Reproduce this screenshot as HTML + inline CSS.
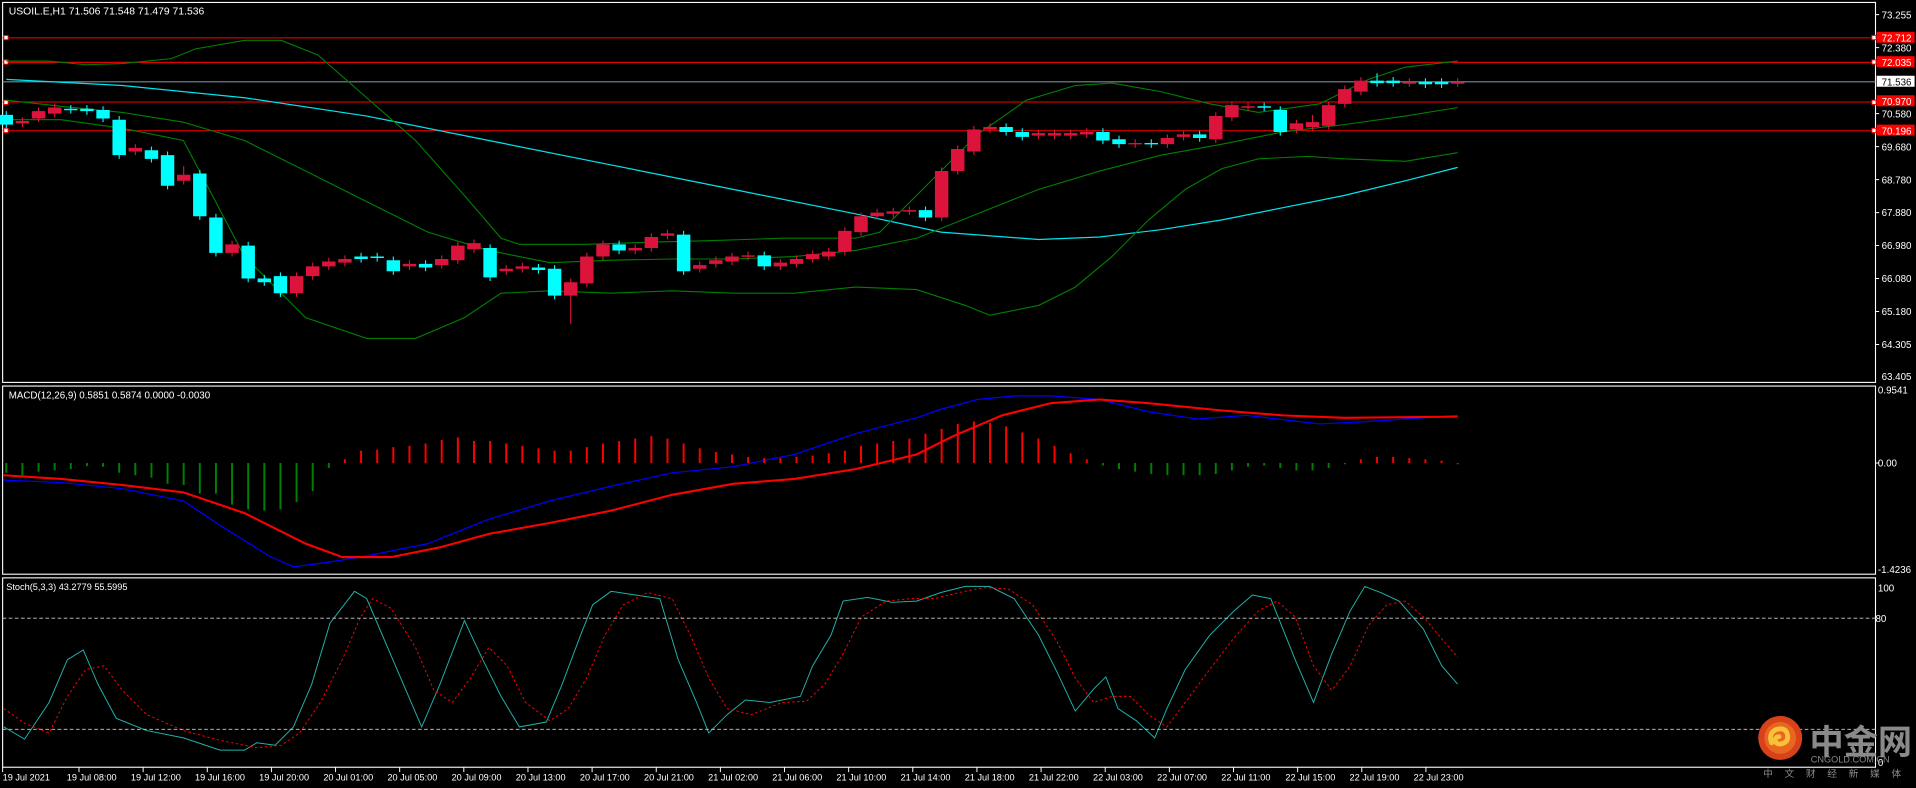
<!DOCTYPE html>
<html><head><meta charset="utf-8"><style>
html,body{margin:0;padding:0;background:#000;overflow:hidden}
svg{display:block}
text{font-family:"Liberation Sans",sans-serif;fill:#fff}
</style></head><body>
<svg width="1916" height="788" viewBox="0 0 1568 645" xmlns="http://www.w3.org/2000/svg">
<rect width="1568" height="645" fill="#000"/>
<g fill="none" stroke="#fff" stroke-width="0.9">
<rect x="2" y="2" width="1533" height="311"/>
<rect x="2" y="316" width="1533" height="154"/>
<rect x="2" y="473" width="1533" height="155"/>
</g>
<g stroke-width="0.9">
<line x1="2" x2="1535" y1="31" y2="31" stroke="#f00"/>
<line x1="2" x2="1535" y1="51" y2="51" stroke="#f00"/>
<line x1="2" x2="1535" y1="67" y2="67" stroke="#778899"/>
<line x1="2" x2="1535" y1="83.5" y2="83.5" stroke="#f00"/>
<line x1="2" x2="1535" y1="107" y2="107" stroke="#f00" stroke-width="0.7"/>
</g>
<g fill="#fff" stroke="#f00" stroke-width="0.8">
<rect x="3" y="29" width="3.5" height="3.5"/><rect x="3" y="49" width="3.5" height="3.5"/><rect x="3" y="82" width="3.5" height="3.5"/><rect x="3" y="105" width="3.5" height="3.5"/>
<rect x="1532" y="29" width="3.5" height="3.5"/><rect x="1532" y="49" width="3.5" height="3.5"/><rect x="1532" y="82" width="3.5" height="3.5"/><rect x="1532" y="105" width="3.5" height="3.5"/>
</g>
<!-- indicators -->
<g fill="none">
<polyline stroke="#00e5ee" stroke-width="1" points="5,65 100,70 200,80 300,95 400,115 500,135 600,155 700,175 770,190 850,196 900,194 950,188 1000,180 1050,170 1100,160 1150,148 1193,137"/>
<polyline stroke="#008000" stroke-width="0.9" points="5,50 40,50 70,53 100,52 140,48 160,40 200,33 230,33 260,45 300,80 340,115 380,160 410,195 425,200 480,200 540,198 580,197 640,195 700,195 720,190 760,150 800,110 840,82 880,70 910,68 950,75 990,85 1030,92 1080,85 1120,65 1150,55 1193,50"/>
<polyline stroke="#008000" stroke-width="0.9" points="5,82 50,87 100,92 150,100 200,115 250,140 300,165 350,190 400,205 450,215 500,213 550,212 600,212 650,210 700,205 750,195 800,175 850,155 900,140 950,127 1000,118 1050,108 1100,102 1150,95 1193,88"/>
<polyline stroke="#008000" stroke-width="0.9" points="5,98 50,98 100,105 150,115 200,210 250,260 300,277 340,277 380,260 410,240 450,238 500,240 550,238 600,240 650,240 700,235 750,237 790,250 810,258 850,250 880,235 910,210 940,180 970,155 1000,138 1030,130 1070,128 1100,130 1150,132 1193,125"/>
<polyline stroke="#0000ff" stroke-width="1" points="3,393 50,395 100,400 150,410 180,430 220,455 240,464 270,460 300,455 350,445 400,425 450,410 500,398 550,387 600,382 650,372 700,355 750,342 770,335 800,327 830,324 860,324 900,327 940,337 980,343 1020,340 1080,347 1120,345 1193,340"/>
<polyline stroke="#ff0000" stroke-width="1.7" points="3,389 50,392 100,397 150,403 200,420 250,445 280,456 320,456 360,448 400,437 450,428 500,418 550,405 600,396 650,392 700,384 750,372 780,357 820,340 860,330 900,327 940,330 1000,336 1050,340 1100,342 1193,341"/>
<polyline stroke="#20b2aa" stroke-width="0.8" points="3,595 20,605 40,575 55,540 68,532 80,560 95,588 120,598 150,604 180,614 200,614 210,608 225,610 240,595 255,560 270,510 290,484 300,490 315,525 330,560 345,595 360,560 380,508 395,540 410,570 425,595 447,591 460,560 475,520 485,495 500,484 520,487 540,490 555,540 570,575 580,600 595,585 610,573 630,575 655,570 665,545 680,520 690,492 710,489 730,493 750,492 770,485 790,480 810,480 830,490 850,520 865,550 880,582 895,564 905,554 915,580 930,590 945,604 955,580 970,548 990,520 1010,500 1025,487 1040,490 1060,540 1075,575 1090,535 1105,500 1117,480 1130,485 1145,492 1165,515 1180,545 1193,560"/>
<polyline stroke="#ff0000" stroke-width="0.8" stroke-dasharray="2,2" points="3,580 20,592 40,600 55,570 70,548 85,545 100,565 120,585 150,598 180,606 210,612 230,610 245,600 262,575 280,540 295,505 305,490 320,498 340,530 355,565 370,575 385,555 400,530 415,545 430,575 450,590 465,580 480,555 495,520 510,495 530,485 550,490 565,520 580,555 595,580 615,585 640,575 660,574 675,560 690,535 705,505 725,492 745,490 765,490 785,485 805,481 825,482 845,495 865,525 880,555 895,575 910,570 925,570 940,585 955,595 970,575 990,548 1010,522 1030,500 1045,492 1060,505 1075,545 1090,565 1105,545 1120,512 1135,495 1150,492 1165,505 1180,523 1193,538"/>
</g>
<!-- candle wicks -->
<path fill="none" stroke="#00ffff" stroke-width="0.9" d="M5,91V105M57.8,86V93M71,86V94M84.2,87V100M97.4,95V130M123.8,120V133M137,124V155M163.4,139V180M176.6,175V210M203,198V231M216.2,225V234M229.4,223V243M295.4,207V215M308.6,207V214M321.8,210V225M348.2,213V222M401,200V230M440.6,216V224M453.8,217V245M506.6,197V208M559.4,189V225M625.4,206V221M757.4,169V181M823.4,101V111M836.6,105V115M902.6,105V118M915.8,111V121M942.2,114V121M981.8,107V116M1034.6,84V91M1047.8,87V111M1127,60V71M1140.2,63V71M1166.6,64V72M1179.8,64V72"/>
<path fill="none" stroke="#dc143c" stroke-width="0.9" d="M18.2,96V104M31.4,88V100M44.6,85V96M110.6,118V127M150.2,136V151M189.8,197V210M242.6,223V243M255.8,215V229M269,211V221M282.2,209V218M335,213V221M361.4,209V220M374.6,198V216M387.8,196V207M414.2,217V225M427.4,215V223M467,228V265M480.2,207V235M493.4,197V213M519.8,200V208M533,191V206M546.2,188V196M572.6,214V223M585.8,210V219M599,207V217M612.2,206V213M638.6,212V221M651.8,209V219M665,205V215M678.2,203V213M691.4,186V209M704.6,174V193M717.8,171V180M731,170V178M744.2,169V176M770.6,137V181M783.8,119V143M797,103V127M810.2,101V109M849.8,106V114M863,106V114M876.2,106V114M889.4,105V113M929,114V121M955.4,110V121M968.6,107V115M995,92V117M1008.2,83V99M1021.4,84V91M1061,98V109M1074.2,94V107M1087.4,83V106M1100.6,70V88M1113.8,63V78M1153.4,64V71M1193,64V71"/>
<!-- candle bodies -->
<path fill="#00ffff" d="M-0.5,94h11v8h-11zM52.3,89h11v1.2h-11zM65.5,89h11v2h-11zM78.7,90h11v7h-11zM91.9,98h11v29h-11zM118.3,123h11v7h-11zM131.5,127h11v25h-11zM157.9,142h11v35h-11zM171.1,178h11v29h-11zM197.5,201h11v27h-11zM210.7,228h11v3h-11zM223.9,226h11v14h-11zM289.9,210h11v2h-11zM303.1,210h11v1.2h-11zM316.3,213h11v9h-11zM342.7,216h11v3h-11zM395.5,203h11v24h-11zM435.1,219h11v2h-11zM448.3,220h11v22h-11zM501.1,200h11v5h-11zM553.9,192h11v30h-11zM619.9,209h11v9h-11zM751.9,172h11v6h-11zM817.9,104h11v4h-11zM831.1,108h11v4h-11zM897.1,108h11v7h-11zM910.3,114h11v4h-11zM936.7,117h11v1.2h-11zM976.3,110h11v3h-11zM1029.1,87h11v1.2h-11zM1042.3,90h11v18h-11zM1121.5,66h11v2h-11zM1134.7,66h11v2h-11zM1161.1,67h11v2h-11zM1174.3,67h11v2h-11z"/>
<path fill="#dc143c" d="M12.7,99h11v2h-11zM25.9,91h11v6h-11zM39.1,88h11v5h-11zM105.1,121h11v3h-11zM144.7,143h11v5h-11zM184.3,200h11v7h-11zM237.1,226h11v14h-11zM250.3,218h11v8h-11zM263.5,214h11v4h-11zM276.7,212h11v3h-11zM329.5,216h11v2h-11zM355.9,212h11v5h-11zM369.1,201h11v12h-11zM382.3,199h11v5h-11zM408.7,220h11v2h-11zM421.9,218h11v2h-11zM461.5,231h11v11h-11zM474.7,210h11v22h-11zM487.9,200h11v10h-11zM514.3,203h11v2h-11zM527.5,194h11v9h-11zM540.7,191h11v2h-11zM567.1,217h11v3h-11zM580.3,213h11v3h-11zM593.5,210h11v4h-11zM606.7,209h11v1.2h-11zM633.1,215h11v3h-11zM646.3,212h11v4h-11zM659.5,208h11v4h-11zM672.7,206h11v4h-11zM685.9,189h11v17h-11zM699.1,177h11v13h-11zM712.3,174h11v3h-11zM725.5,173h11v2h-11zM738.7,172h11v1.2h-11zM765.1,140h11v38h-11zM778.3,122h11v18h-11zM791.5,106h11v18h-11zM804.7,104h11v2h-11zM844.3,109h11v2h-11zM857.5,109h11v2h-11zM870.7,109h11v2h-11zM883.9,108h11v2h-11zM923.5,117h11v1.2h-11zM949.9,113h11v5h-11zM963.1,110h11v2h-11zM989.5,95h11v19h-11zM1002.7,86h11v10h-11zM1015.9,87h11v1.2h-11zM1055.5,101h11v5h-11zM1068.7,100h11v4h-11zM1081.9,86h11v17h-11zM1095.1,73h11v12h-11zM1108.3,66h11v9h-11zM1147.9,67.4h11v1.2h-11zM1187.5,67.4h11v1.2h-11z"/>
<!-- histogram -->
<path fill="none" stroke="#008000" stroke-width="1.6" d="M5,379v8M18.2,379v10M31.4,379v7M44.6,379v6M57.8,379v5M71,379v2.5M84.2,379v3M97.4,379v8M110.6,379v10M123.8,379v12M137,379v17M150.2,379v18M163.4,379v25M176.6,379v25M189.8,379v34M203,379v38M216.2,379v39M229.4,379v38M242.6,379v32M255.8,379v23M269,379v4M902.6,379v2M915.8,379v5M929,379v7M942.2,379v9M955.4,379v10M968.6,379v10M981.8,379v10M995,379v9M1008.2,379v6M1021.4,379v3M1034.6,379v2M1047.8,379v4M1061,379v6M1074.2,379v6M1087.4,379v4M1100.6,379v1M1193,379v1"/>
<path fill="none" stroke="#ff0000" stroke-width="1.6" d="M282.2,379v-3M295.4,379v-10M308.6,379v-11M321.8,379v-13M335,379v-14M348.2,379v-16M361.4,379v-19M374.6,379v-21M387.8,379v-18M401,379v-18M414.2,379v-16M427.4,379v-14M440.6,379v-12M453.8,379v-10M467,379v-10M480.2,379v-13M493.4,379v-16M506.6,379v-18M519.8,379v-20M533,379v-22M546.2,379v-20M559.4,379v-16M572.6,379v-12M585.8,379v-9M599,379v-7M612.2,379v-5M625.4,379v-4M638.6,379v-4M651.8,379v-5M665,379v-6M678.2,379v-8M691.4,379v-10M704.6,379v-14M717.8,379v-16M731,379v-18M744.2,379v-20M757.4,379v-24M770.6,379v-28M783.8,379v-32M797,379v-34M810.2,379v-33M823.4,379v-30M836.6,379v-25M849.8,379v-20M863,379v-14M876.2,379v-8M889.4,379v-3M1113.8,379v-3M1127,379v-5M1140.2,379v-5M1153.4,379v-4M1166.6,379v-3M1179.8,379v-2"/>
<line x1="2" x2="1535" y1="506" y2="506" stroke="#ccc" stroke-width="0.7" stroke-dasharray="3,2"/>
<line x1="2" x2="1535" y1="597" y2="597" stroke="#ccc" stroke-width="0.7" stroke-dasharray="3,2"/>
<text x="7" y="12" font-size="8.5">USOIL.E,H1  71.506 71.548 71.479 71.536</text>
<text x="7" y="326" font-size="8">MACD(12,26,9) 0.5851 0.5874 0.0000 -0.0030</text>
<text x="5" y="483" font-size="7.5">Stoch(5,3,3) 43.2779 55.5995</text>
<g font-size="8">
<text x="1540" y="15">73.255</text>
<text x="1540" y="42">72.380</text>
<text x="1540" y="96">70.580</text>
<text x="1540" y="123">69.680</text>
<text x="1540" y="150">68.780</text>
<text x="1540" y="177">67.880</text>
<text x="1540" y="204">66.980</text>
<text x="1540" y="231">66.080</text>
<text x="1540" y="258">65.180</text>
<text x="1540" y="285">64.305</text>
<text x="1540" y="311">63.405</text>
<text x="1537" y="322">0.9541</text>
<text x="1537" y="382">0.00</text>
<text x="1537" y="469">-1.4236</text>
<text x="1537" y="484">100</text>
<text x="1535" y="509">80</text>
<text x="1537" y="627">0</text>
</g>
<rect x="1536" y="26" width="31" height="9" fill="#f00"/><text x="1540" y="34" font-size="8">72.712</text>
<rect x="1536" y="46" width="31" height="9" fill="#f00"/><text x="1540" y="54" font-size="8">72.035</text>
<rect x="1536" y="62" width="31" height="9" fill="#fff"/><text x="1540" y="70" font-size="8" style="fill:#000">71.536</text>
<rect x="1536" y="78" width="31" height="9" fill="#f00"/><text x="1540" y="86" font-size="8">70.970</text>
<rect x="1536" y="102" width="31" height="9" fill="#f00"/><text x="1540" y="110" font-size="8">70.196</text>
<path stroke="#fff" stroke-width="0.8" d="M1535,12h3M1535,39h3M1535,93h3M1535,120h3M1535,147h3M1535,174h3M1535,201h3M1535,228h3M1535,255h3M1535,282h3M1535,379h3"/>
<!-- bottom axis -->
<path stroke="#fff" stroke-width="0.8" d="M2,628v4M64.5,628v4M117,628v4M169.5,628v4M222,628v4M274.5,628v4M327,628v4M379.5,628v4M432,628v4M484.5,628v4M537,628v4M589.5,628v4M642,628v4M694.5,628v4M747,628v4M799.5,628v4M852,628v4M904.5,628v4M957,628v4M1009.5,628v4M1062,628v4M1114.5,628v4M1167,628v4"/>
<g font-size="7.5">
<text x="2" y="639">19 Jul 2021</text>
<text x="54.5" y="639">19 Jul 08:00</text>
<text x="107" y="639">19 Jul 12:00</text>
<text x="159.5" y="639">19 Jul 16:00</text>
<text x="212" y="639">19 Jul 20:00</text>
<text x="264.5" y="639">20 Jul 01:00</text>
<text x="317" y="639">20 Jul 05:00</text>
<text x="369.5" y="639">20 Jul 09:00</text>
<text x="422" y="639">20 Jul 13:00</text>
<text x="474.5" y="639">20 Jul 17:00</text>
<text x="527" y="639">20 Jul 21:00</text>
<text x="579.5" y="639">21 Jul 02:00</text>
<text x="632" y="639">21 Jul 06:00</text>
<text x="684.5" y="639">21 Jul 10:00</text>
<text x="737" y="639">21 Jul 14:00</text>
<text x="789.5" y="639">21 Jul 18:00</text>
<text x="842" y="639">21 Jul 22:00</text>
<text x="894.5" y="639">22 Jul 03:00</text>
<text x="947" y="639">22 Jul 07:00</text>
<text x="999.5" y="639">22 Jul 11:00</text>
<text x="1052" y="639">22 Jul 15:00</text>
<text x="1104.5" y="639">22 Jul 19:00</text>
<text x="1157" y="639">22 Jul 23:00</text>
</g>
<!-- logo -->
<circle cx="1457" cy="604" r="18" fill="#d8421a"/>
<circle cx="1457" cy="604" r="13" fill="#e8661f"/>
<path d="M1450 608 q-3 -8 4 -11 q8 -2 9 5 q1 6 -6 7 q-4 0 -4 -3 q0 -3 3 -3" fill="none" stroke="#f7c23a" stroke-width="4" stroke-linecap="round"/>
<text x="1481" y="617" font-size="28" font-weight="bold" style="fill:#8a8a8a;font-family:'Liberation Sans','Noto Sans CJK SC',sans-serif">中金网</text>
<text x="1482" y="624" font-size="7.5" style="fill:#8a8a8a">CNGOLD.COM.CN</text>
<text x="1443" y="636" font-size="8" letter-spacing="9.5" style="fill:#8a8a8a;font-family:'Liberation Sans','Noto Sans CJK SC',sans-serif">中文财经新媒体</text>
</svg>
</body></html>
